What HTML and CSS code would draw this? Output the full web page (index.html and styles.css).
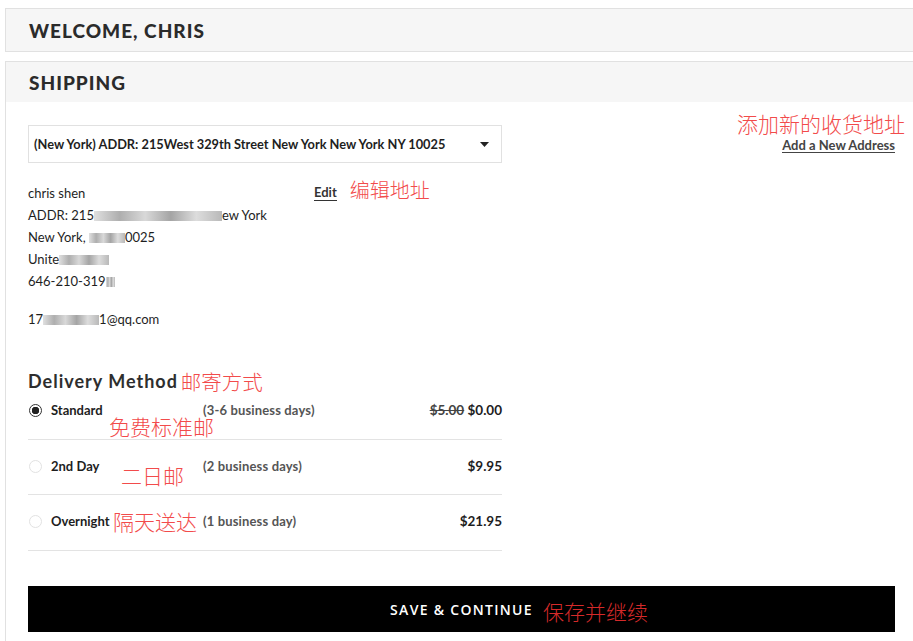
FILE: index.html
```html
<!DOCTYPE html>
<html lang="en">
<head>
<meta charset="utf-8">
<title>Checkout - Shipping</title>
<link rel="stylesheet" href="styles.css">
</head>
<body>
<div class="page">
  <section class="welcome">
    <h1 class="bar-title">WELCOME, CHRIS</h1>
  </section>

  <section class="shipping">
    <header class="ship-head">
      <h2 class="bar-title">SHIPPING</h2>
    </header>
    <div class="ship-body">
      <div class="top-row">
        <div class="left-col">
          <div class="select">
            <span class="select-text">(New York) ADDR: 215West 329th Street New York New York NY 10025</span>
            <svg class="caret" width="9" height="5" viewBox="0 0 9 5"><path d="M0 0h9L4.5 5z" fill="#222"/></svg>
          </div>

          <div class="address">
            <div class="addr-lines">
              <div>chris shen</div>
              <div>ADDR: 215<span class="blur w1"></span>ew York</div>
              <div>New York, <span class="blur w2"></span>0025</div>
              <div>Unite<span class="blur w3"></span></div>
              <div>646-210-319<span class="blur w4"></span></div>
              <div class="email">17<span class="blur w5"></span>1@qq.com</div>
            </div>
            <div class="edit-group">
              <a class="edit">Edit</a>
              <span class="note note-edit">编辑地址</span>
            </div>
          </div>

          <h3 class="dm-title">Delivery Method<span class="note note-dm">邮寄方式</span></h3>

          <div class="methods">
            <label class="method first">
              <span class="radio checked"></span>
              <span class="m-name">Standard</span>
              <span class="m-days">(3-6 business days)</span>
              <span class="m-price"><s class="old">$5.00</s> $0.00</span>
              <span class="note note-row n1">免费标准邮</span>
            </label>
            <label class="method">
              <span class="radio"></span>
              <span class="m-name">2nd Day</span>
              <span class="m-days">(2 business days)</span>
              <span class="m-price">$9.95</span>
              <span class="note note-row n2">二日邮</span>
            </label>
            <label class="method last">
              <span class="radio"></span>
              <span class="m-name">Overnight</span>
              <span class="m-days">(1 business day)</span>
              <span class="m-price">$21.95</span>
              <span class="note note-row n3">隔天送达</span>
            </label>
          </div>
        </div>

        <div class="right-col">
          <span class="note note-add">添加新的收货地址</span>
          <a class="add-link">Add a New Address</a>
        </div>
      </div>

      <button class="save">
        <span class="save-label">SAVE &amp; CONTINUE<span class="note note-save">保存并继续</span></span>
      </button>
    </div>
  </section>
</div>
</body>
</html>
```

FILE: styles.css
```css
* { box-sizing: border-box; }
html, body { margin: 0; padding: 0; background: #fff; }
body {
  font-family: Lato, "Noto Sans", "Liberation Sans", sans-serif;
  color: #222;
  overflow: hidden;
}
.page {
  padding: 8px 0 0 5px;
  width: 913px;
}
.welcome {
  height: 44px;
  background: #f6f6f6;
  border: 1px solid #e1e1e1;
  border-right: none;
  display: flex;
  align-items: center;
  padding-left: 23px;
  margin-bottom: 9px;
}
.bar-title {
  margin: 0;
  font-family: Lato, "DejaVu Sans", sans-serif;
  font-weight: 900;
  font-size: 19px;
  letter-spacing: 1px;
  color: #2b2b2b;
}
.shipping {
  border-top: 1px solid #e1e1e1;
  border-left: 1px solid #e1e1e1;
}
.ship-head {
  height: 40px;
  background: #f6f6f6;
  display: flex;
  align-items: center;
  padding-left: 23px;
}
.ship-body {
  padding: 10px 18px 9px 22px;
}
.top-row {
  display: flex;
  justify-content: space-between;
}
.left-col {
  width: 474px;
  padding-top: 13px;
}
.select {
  height: 38px;
  border: 1px solid #e1e1e1;
  display: flex;
  align-items: center;
  justify-content: space-between;
  padding: 0 12px 0 5px;
}
.select-text {
  font-size: 12.8px;
  font-weight: 700;
  color: #1e1e1e;
}
.caret { display: block; }

.address {
  margin-top: 19px;
  display: grid;
  grid-template-columns: 286px auto;
  align-items: start;
}
.addr-lines {
  font-size: 13px;
  line-height: 22px;
  color: #1e1e1e;
}
.addr-lines .email { margin-top: 16px; }
.blur {
  display: inline-block;
  height: 10px;
  vertical-align: -1px;
  background: linear-gradient(90deg, #d8d8d8, #9a9a9a 20%, #cfcfcf 40%, #8e8e8e 60%, #d4d4d4 80%, #a7a7a7);
  opacity: 0.8;
}
.w1 { width: 128px; }
.w2 { width: 36px; }
.w3 { width: 50px; }
.w4 { width: 9px; }
.w5 { width: 56px; }

.edit-group {
  display: flex;
  align-items: center;
  height: 22px;
}
.edit {
  font-size: 13px;
  font-weight: 700;
  color: #333;
  border-bottom: 1.5px solid #333;
  line-height: 15px;
  margin-right: 13px;
}
.note {
  font-family: "Noto Sans CJK SC", sans-serif;
  font-weight: 300;
  color: #f24b4b;
}
.note-edit { font-size: 20px; line-height: 24px; margin-top: -6px; }

.dm-title {
  margin: 39px 0 0;
  height: 24px;
  font-size: 18px;
  line-height: 24px;
  font-weight: 700;
  letter-spacing: 1px;
  color: #2e2e2e;
  display: flex;
  align-items: center;
}
.note-dm { font-size: 20.5px; line-height: 24px; letter-spacing: 0; margin-left: 3px; }

.method {
  position: relative;
  display: grid;
  grid-template-columns: 23px 152px 1fr auto;
  align-items: center;
  height: 55px;
  padding-top: 16px;
  align-content: start;
  border-bottom: 1px solid #e3e3e3;
  font-size: 13px;
  line-height: 20px;
}
.method.first {
  height: 47px;
  padding-top: 7px;
}
.method.last {
  height: 56px;
}
.radio {
  width: 13px;
  height: 13px;
  border-radius: 50%;
  border: 1px solid #e2e2e2;
  margin-left: 1px;
}
.radio.checked {
  border: 1px solid #333;
  background: radial-gradient(circle, #222 0 3.5px, #fff 4px);
}
.m-name { font-weight: 700; color: #1e1e1e; }
.m-days { color: #555; font-weight: 700; letter-spacing: 0.15px; }
.m-price { font-weight: 700; color: #1e1e1e; font-size: 13.5px; }
.old { color: #444; }
.note-row {
  position: absolute;
  font-size: 21px;
  line-height: 26px;
}
.n1 { left: 81px; top: 20px; }
.n2 { left: 93px; top: 22px; }
.n3 { left: 85px; top: 13px; }

.right-col {
  display: flex;
  flex-direction: column;
  align-items: flex-end;
}
.note-add { font-size: 21px; line-height: 22px; margin-right: -10px; }
.add-link {
  font-size: 13px;
  font-weight: 700;
  color: #444;
  line-height: 14px;
  border-bottom: 1.5px solid #444;
  margin-top: 4px;
}

.save {
  display: flex;
  justify-content: center;
  align-items: center;
  width: 100%;
  height: 46px;
  margin-top: 35px;
  background: #000;
  border: none;
  padding: 0;
  font-family: "Open Sans", Lato, sans-serif;
}
.save-label {
  position: relative;
  color: #fff;
  font-size: 14px;
  font-weight: 600;
  letter-spacing: 1.3px;
}
.note-save {
  position: absolute;
  left: calc(100% + 10px);
  top: -4px;
  font-size: 21px;
  color: #d52a2a;
  letter-spacing: 0;
  white-space: nowrap;
}
```
